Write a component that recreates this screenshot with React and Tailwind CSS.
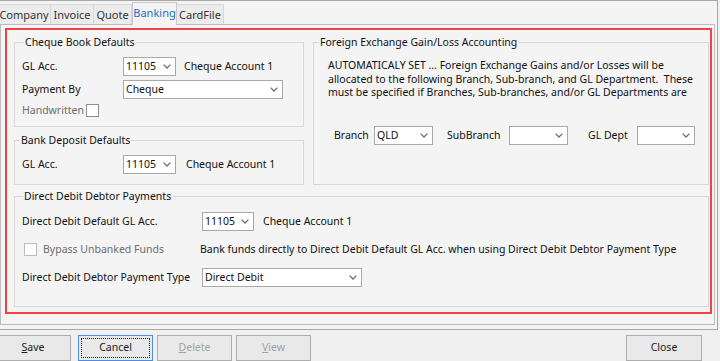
import React from "react";

function Chev() {
  return (
    <svg width="8" height="5" viewBox="0 0 8 5" className="shrink-0">
      <path d="M0.6 0.6 L4 4 L7.4 0.6" fill="none" stroke="#6e6e6e" strokeWidth="1.3" />
    </svg>
  );
}

function Select({ className, value }) {
  return (
    <div className={"shrink-0 flex items-center justify-between h-[19px] border border-[#a9a9a9] bg-white pl-[2px] pr-[4px] " + className}>
      <span className="leading-none">{value}</span>
      <Chev />
    </div>
  );
}

function Group({ title, titleLeft, className, children }) {
  return (
    <div className={"relative border border-[#d8d8d8] " + className}>
      <span className={"absolute top-[-8px] bg-[#f4f4f4] px-[1px] leading-[14px] " + titleLeft}>{title}</span>
      {children}
    </div>
  );
}

function Check({ className }) {
  return <div className={"shrink-0 w-[13px] h-[13px] border bg-white " + className} />;
}

function Tab({ label, w, selected }) {
  if (selected) {
    return (
      <div className={"relative z-10 h-[23px] mb-[-1px] border-t border-l border-r border-[#c9c9c9] bg-[#f4f4f4] flex items-center justify-center pb-[1px] text-[#1a6fc4] " + w}>
        {label}
      </div>
    );
  }
  return (
    <div className={"h-[20px] border-t border-r border-[#d6d6d6] bg-[#ececec] flex items-center justify-center pt-[1px] text-[#333] " + w}>
      {label}
    </div>
  );
}

function Btn({ children, className, focused, disabled }) {
  return (
    <div
      className={
        "h-[26px] flex items-center justify-center border bg-[#e9e9e9] " +
        (focused ? "border-[#4a90e2] p-[2px] " : "border-[#adadad] ") +
        (disabled ? "text-[#a3a3a3] " : "text-[#1a1a1a] ") +
        className
      }
    >
      {focused ? (
        <div className="w-full h-full border border-dotted border-[#222] flex items-center justify-center">{children}</div>
      ) : (
        children
      )}
    </div>
  );
}

export default function App() {
  return (
    <div className="w-[720px] h-[361px] bg-[#f0f0f0] overflow-hidden text-[10.5px] text-[#111] font-['Noto_Sans',sans-serif]">
      <div className="w-[718px] h-[330px] border-t border-r border-b border-[#a8a8a8] bg-[#f4f4f4] flex flex-col">
        {/* Tabs */}
        <div className="h-[23px] flex items-end ml-[-2px] text-[11px]">
          <Tab label="Company" w="w-[53px]" />
          <Tab label="Invoice" w="w-[43px]" />
          <Tab label="Quote" w="w-[38px]" />
          <Tab label="Banking" w="w-[45px]" selected />
          <Tab label="CardFile" w="w-[47px]" />
        </div>
        {/* Panel */}
        <div className="w-[715px] h-[301px] border border-[#bdbdbd] bg-[#f4f4f4]">
          <div className="ml-[4px] mt-[3px] w-[707px] h-[286px] border-2 border-[#f04444] pl-[7px] pt-[12px] flex flex-col">
            <div className="flex items-start">
              <div className="flex flex-col w-[290px]">
                <Group title="Cheque Book Defaults" titleLeft="left-[9px]" className="h-[85px] pl-[7px] pt-[14px]">
                  <div className="h-[19px] flex items-center">
                    <span className="w-[101px] shrink-0">GL Acc.</span>
                    <Select className="w-[53px]" value="11105" />
                    <span className="ml-[8px]">Cheque Account 1</span>
                  </div>
                  <div className="h-[19px] mt-[4px] flex items-center">
                    <span className="w-[101px] shrink-0">Payment By</span>
                    <Select className="w-[160px]" value="Cheque" />
                  </div>
                  <div className="h-[15px] mt-[4px] flex items-center">
                    <span className="w-[64px] shrink-0 text-[#6d6d6d]">Handwritten</span>
                    <Check className="border-[#8f8f8f]" />
                  </div>
                </Group>
                <Group title="Bank Deposit Defaults" titleLeft="left-[5px]" className="mt-[13px] h-[45px] pl-[7px] pt-[14px]">
                  <div className="h-[19px] flex items-center">
                    <span className="w-[101px] shrink-0">GL Acc.</span>
                    <Select className="w-[53px]" value="11105" />
                    <span className="ml-[10px]">Cheque Account 1</span>
                  </div>
                </Group>
              </div>
              <Group title="Foreign Exchange Gain/Loss Accounting" titleLeft="left-[5px]" className="ml-[9px] w-[396px] h-[143px] pt-[16px]">
                <div className="pl-[14px] h-[41px] leading-[13.5px] whitespace-pre">
                  <div>AUTOMATICALY SET ... Foreign Exchange Gains and/or Losses will be</div>
                  <div>allocated to the following Branch, Sub-branch, and GL Department.  These</div>
                  <div>must be specified if Branches, Sub-branches, and/or GL Departments are</div>
                </div>
                <div className="mt-[26px] pl-[20px] h-[19px] flex items-center">
                  <span className="w-[40px] shrink-0">Branch</span>
                  <Select className="w-[59px]" value="QLD" />
                  <span className="ml-[14px] w-[62px] shrink-0">SubBranch</span>
                  <Select className="w-[59px]" value="" />
                  <span className="ml-[20px] w-[49px] shrink-0">GL Dept</span>
                  <Select className="w-[58px]" value="" />
                </div>
              </Group>
            </div>
            <Group title="Direct Debit Debtor Payments" titleLeft="left-[8px]" className="mt-[11px] w-[695px] h-[111px] pl-[7px] pt-[15px]">
              <div className="h-[19px] flex items-center">
                <span className="w-[180px] shrink-0">Direct Debit Default GL Acc.</span>
                <Select className="w-[52px]" value="11105" />
                <span className="ml-[9px]">Cheque Account 1</span>
              </div>
              <div className="h-[15px] mt-[11px] flex items-center">
                <div className="w-[178px] shrink-0 flex items-center">
                  <Check className="ml-[2px] border-[#bcbcbc]" />
                  <span className="ml-[6px] text-[#6d6d6d]">Bypass Unbanked Funds</span>
                </div>
                <span>Bank funds directly to Direct Debit Default GL Acc. when using Direct Debit Debtor Payment Type</span>
              </div>
              <div className="h-[19px] mt-[11px] flex items-center">
                <span className="w-[180px] shrink-0">Direct Debit Debtor Payment Type</span>
                <Select className="w-[160px]" value="Direct Debit" />
              </div>
            </Group>
          </div>
        </div>
      </div>
      {/* Button bar */}
      <div className="mt-[5px] flex items-start text-[10.5px]">
        <Btn className="ml-[-5px] w-[76px]"><span><span className="underline">S</span>ave</span></Btn>
        <Btn className="ml-[7px] w-[75px]" focused>Cancel</Btn>
        <Btn className="ml-[4px] w-[75px]" disabled><span><span className="underline">D</span>elete</span></Btn>
        <Btn className="ml-[4px] w-[75px]" disabled><span><span className="underline">V</span>iew</span></Btn>
        <Btn className="ml-auto mr-[18px] w-[76px]">Close</Btn>
      </div>
    </div>
  );
}
